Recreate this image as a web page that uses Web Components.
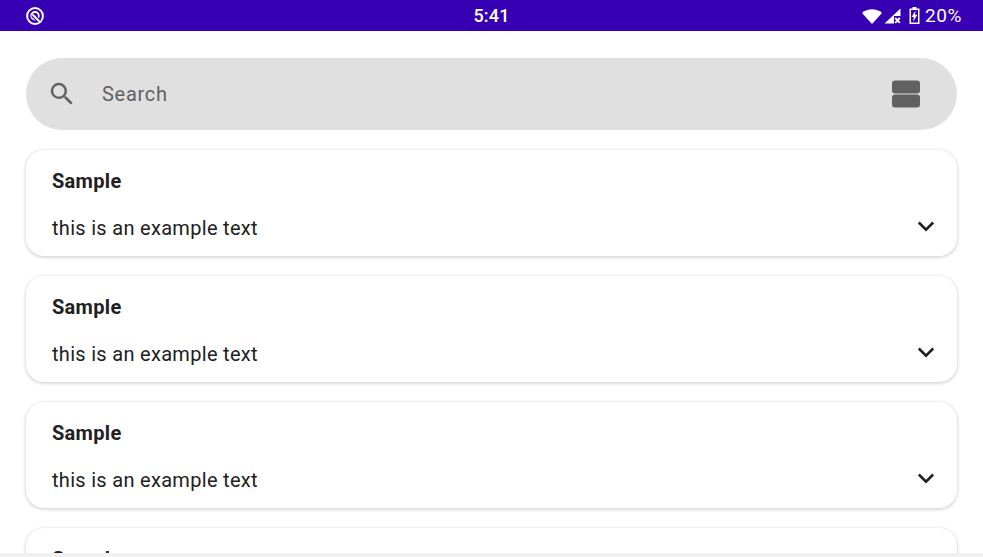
<!DOCTYPE html>
<html>
<head>
<meta charset="utf-8">
<title>Sample list</title>
<style>
	html, body {
		margin: 0;
		height: 100%;
		overflow: hidden;
		background: #fff;
		font-family: Roboto, sans-serif;
	}
</style>
</head>
<body>
<app-screen>
	<status-bar slot="status"></status-bar>
	<search-bar slot="search"></search-bar>
	<sample-card title-text="Sample">this is an example text</sample-card>
	<sample-card title-text="Sample">this is an example text</sample-card>
	<sample-card title-text="Sample">this is an example text</sample-card>
	<sample-card title-text="Sample">this is an example text</sample-card>
</app-screen>
<script>
class AppScreen extends HTMLElement {
	constructor(){
		super();
		this.attachShadow({mode:"open"});
		this.shadowRoot.innerHTML = /*html*/`
			<style>
				:host {
					display: flex;
					flex-direction: column;
					position: relative;
					height: 557px;
					overflow: hidden;
				}
				.content {
					display: flex;
					flex-direction: column;
					gap: 20px;
					padding: 27px 26px 0;
				}
				.cards {
					display: flex;
					flex-direction: column;
					gap: 20px;
				}
				.bottom-edge {
					position: absolute;
					left: 0;
					right: 0;
					bottom: 0;
					height: 4px;
					background: #f1f1f1;
				}
			</style>
			<slot name="status"></slot>
			<div class="content">
				<slot name="search"></slot>
				<div class="cards"><slot></slot></div>
			</div>
			<div class="bottom-edge"></div>
		`;
	}
}
customElements.define("app-screen",AppScreen);

class StatusBar extends HTMLElement {
	constructor(){
		super();
		this.attachShadow({mode:"open"});
		this.shadowRoot.innerHTML = /*html*/`
			<style>
				:host {
					display: grid;
					grid-template-columns: 1fr auto 1fr;
					align-items: center;
					flex: none;
					height: 31px;
					padding: 0 21px 0 26px;
					background: #3700b3;
					color: #fff;
					font-size: 18px;
				}
				.left, .right {
					display: flex;
					align-items: center;
				}
				.right {
					justify-content: flex-end;
				}
				svg {
					display: block;
					fill: #fff;
				}
				.time {
					font-weight: 500;
					letter-spacing: .2px;
					margin-left: -5px;
				}
				.wifi { margin-right: 2px; }
				.battery { margin: 0 5px 0 8px; }
				.pct {
					font-size: 19px;
					letter-spacing: .6px;
				}
			</style>
			<div class="left">
				<svg width="18" height="18" viewBox="0 0 18 18">
					<circle cx="9" cy="9" r="7.9" fill="none" stroke="#fff" stroke-width="2"/>
					<circle cx="9" cy="8.8" r="3.8" fill="none" stroke="#fff" stroke-width="1.8"/>
					<path d="M6.5 7.5 L13.4 14.4" stroke="#3700b3" stroke-width="4" fill="none"/>
					<path d="M6.5 7.5 L14.6 15.6" stroke="#fff" stroke-width="2" fill="none"/>
				</svg>
			</div>
			<div class="time">5:41</div>
			<div class="right">
				<svg class="wifi" width="20" height="16" viewBox="0 0 20 16"><path d="M0 5 C5.5 0 14.5 0 20 5 L10 16 Z"/></svg>
				<svg width="17" height="16" viewBox="0 0 17 16">
					<path d="M16.5 0.5 V8 H10 V15.5 H0.5 Z"/>
					<path d="M11.2 9.8 L15.8 14.8 M15.8 9.8 L11.2 14.8" stroke="#fff" stroke-width="1.9" fill="none"/>
				</svg>
				<svg class="battery" width="11" height="17" viewBox="0 0 11 17">
					<path fill-rule="evenodd" d="M3.5 0 H7.5 V1.5 H10.5 V17 H0.5 V1.5 H3.5 Z M2 3 V15.5 H9 V3 Z"/>
					<path d="M6.5 3.5 L2.6 10 H4.8 L4.2 14.5 L8.4 7.8 H6 Z"/>
				</svg>
				<span class="pct">20%</span>
			</div>
		`;
	}
}
customElements.define("status-bar",StatusBar);

class SearchBar extends HTMLElement {
	constructor(){
		super();
		this.attachShadow({mode:"open"});
		this.shadowRoot.innerHTML = /*html*/`
			<style>
				:host {
					display: flex;
					align-items: center;
					height: 72px;
					padding: 0 37px 0 21px;
					border-radius: 36px;
					background: #e0e0e0;
					color: #616161;
					font-size: 20px;
					letter-spacing: .7px;
				}
				svg {
					display: block;
					fill: #616161;
					flex: none;
				}
				.label {
					flex: 1;
					margin-left: 25px;
				}
			</style>
			<svg width="30" height="30" viewBox="0 0 24 24"><path d="M15.5 14h-.79l-.28-.27A6.47 6.47 0 0 0 16 9.5 6.5 6.5 0 1 0 9.5 16c1.61 0 3.09-.59 4.23-1.57l.27.28v.79l5 4.99L20.49 19l-4.99-5zm-6 0C7.01 14 5 11.99 5 9.5S7.01 5 9.5 5 14 7.01 14 9.5 11.99 14 9.5 14z"/></svg>
			<span class="label">Search</span>
			<svg width="28" height="28" viewBox="0 0 28 28">
				<rect x="0" y="0.5" width="28" height="13" rx="3"/>
				<rect x="0" y="14.5" width="28" height="13" rx="3"/>
			</svg>
		`;
	}
}
customElements.define("search-bar",SearchBar);

class SampleCard extends HTMLElement {
	constructor(){
		super();
		this.attachShadow({mode:"open"});
		this.shadowRoot.innerHTML = /*html*/`
			<style>
				:host {
					display: flex;
					flex-direction: column;
					flex: none;
					box-sizing: border-box;
					height: 106px;
					padding: 19px 20px 0 26px;
					border-radius: 18px;
					background: #fff;
					color: #212121;
					font-size: 20px;
					letter-spacing: .3px;
					box-shadow: 0 1px 3px 1px rgba(0,0,0,.14), 0 0 2px rgba(0,0,0,.04);
				}
				.title {
					font-weight: 700;
					line-height: 24px;
				}
				.row {
					display: flex;
					align-items: center;
					justify-content: space-between;
					margin-top: 23px;
					line-height: 24px;
				}
				svg {
					display: block;
					fill: none;
					stroke: #212121;
					stroke-width: 2.6;
					margin-top: -5px;
				}
			</style>
			<div class="title" id="title"></div>
			<div class="row">
				<span><slot></slot></span>
				<svg width="22" height="22" viewBox="0 0 22 22"><path d="M3.8 7.5 L11 14.7 L18.2 7.5"/></svg>
			</div>
		`;
		this.shadowRoot.getElementById("title").textContent = this.getAttribute("title-text");
	}
}
customElements.define("sample-card",SampleCard);
</script>
</body>
</html>
